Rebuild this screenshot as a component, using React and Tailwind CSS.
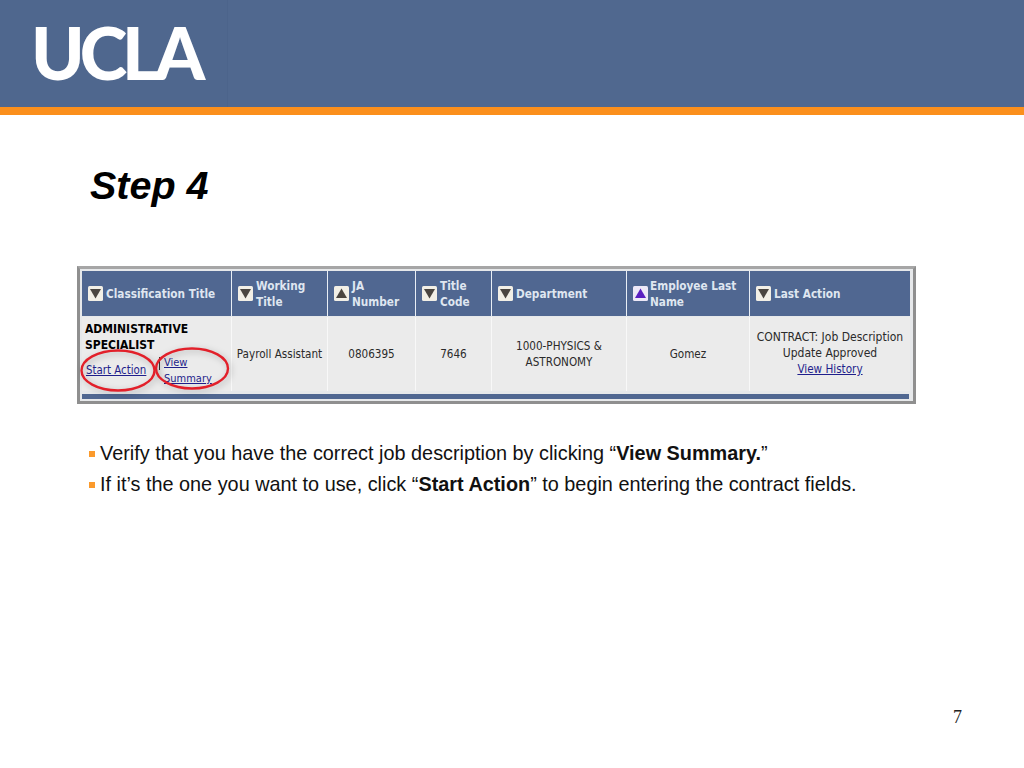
const Sans = "font-['Liberation_Sans',Arial,sans-serif]";
const Tbl = "font-['DejaVu_Sans_Condensed','DejaVu_Sans',sans-serif]";

function Arrow({ up, purple }) {
  return (
    <svg width="15" height="15" viewBox="0 0 15 15" className="shrink-0">
      <rect x="0" y="0" width="15" height="15" rx="1.5" fill={purple ? "#ede8f7" : "#f2efe6"} />
      <path d={up ? "M7.5 2.5 L13 12 L2 12 Z" : "M2 3 L13 3 L7.5 12.5 Z"} fill={purple ? "#5a1fc0" : "#4a4540"} />
    </svg>
  );
}

function Head({ w, up, purple, children, gap = "gap-[3px]" }) {
  return (
    <div className={`flex items-center ${gap} pl-[6px] bg-[#506791] border-r border-[#e8eef5] text-[#dfe6f0] font-bold text-[11.7px] leading-[16px] ${w}`}>
      <Arrow up={up} purple={purple} />
      <div>{children}</div>
    </div>
  );
}

function Cell({ w, children, size = "text-[11.6px]" }) {
  return (
    <div className={`flex items-center justify-center text-center bg-[#ebebeb] border-r border-[#f8f8f8] text-[#2a2a2a] ${size} leading-[16px] ${w}`}>
      <div>{children}</div>
    </div>
  );
}

const Link = ({ children }) => <span className="text-[#1f1f8c] underline">{children}</span>;

export default function App() {
  return (
    <div className={`relative w-[1024px] h-[768px] bg-white overflow-hidden ${Sans}`}>
      <div className="flex h-[107px] bg-[#50688f]">
        <div className="w-[228px] h-full bg-[#4f678e] border-r border-[#4c648b] pl-[31px] pt-[8px]">
          <div className="font-['Lato',sans-serif] font-black text-white text-[72px] leading-[88px] tracking-[-5px]">UCLA</div>
        </div>
      </div>
      <div className="h-[8px] bg-[#fb8f1c]" />

      <h1 className="ml-[90px] mt-[44px] text-[39.5px] leading-[52px] font-bold italic text-black">Step 4</h1>

      <div className={`relative ml-[77px] mt-[55px] w-[839px] h-[138px] border-[3px] border-[#8f8f8f] border-t-[#a6a6a6] bg-[#e6e8ea] p-[2px] ${Tbl}`}>
        <div className="flex h-[45px]">
          <Head w="w-[150px]">Classification Title</Head>
          <Head w="w-[96px]" gap="gap-[3px]"><div>Working<br />Title</div></Head>
          <Head w="w-[88px]" up gap="gap-[3px]"><div>JA<br />Number</div></Head>
          <Head w="w-[76px]" gap="gap-[3px]"><div>Title<br />Code</div></Head>
          <Head w="w-[135px]">Department</Head>
          <Head w="w-[123px]" up purple gap="gap-[2px]">Employee Last<br />Name</Head>
          <Head w="w-[160px] border-r-0" gap="gap-[3px]">Last Action</Head>
        </div>
        <div className="flex h-[74px] mt-px">
          <div className="w-[150px] bg-[#ebebeb] border-r border-[#f8f8f8] pl-[3px] pt-[4px] text-[12px] leading-[16px]">
            <div className="font-bold text-black">ADMINISTRATIVE<br />SPECIALIST</div>
            <div className="flex leading-[16px]">
              <div className="pl-px pt-[9px] w-[74px] text-[11.4px]"><Link>Start Action</Link></div>
              <div className="w-[1px] h-[13px] mt-[4px] bg-[#333]" />
              <div className="pl-[4px] mt-[2px] text-[11px]"><Link>View</Link><br /><Link>Summary</Link></div>
            </div>
          </div>
          <Cell w="w-[96px]">Payroll Assistant</Cell>
          <Cell w="w-[88px]">0806395</Cell>
          <Cell w="w-[76px]">7646</Cell>
          <Cell w="w-[135px]">1000-PHYSICS &amp;<br />ASTRONOMY</Cell>
          <Cell w="w-[123px]">Gomez</Cell>
          <Cell w="w-[160px] border-r-0" size="text-[12px]"><div className="-mt-[2px]">CONTRACT: Job Description<br />Update Approved</div><div className="text-[11.6px]"><Link>View History</Link></div></Cell>
        </div>
        <div className="h-[5px] mt-[3px] w-[827px] bg-[#506791]" />
        <svg className="absolute left-[-1px] top-[77px] pointer-events-none drop-shadow-[2px_2px_3px_rgba(0,0,0,0.25)]" width="160" height="56" viewBox="0 0 160 56">
          <ellipse cx="39" cy="24.5" rx="36.5" ry="20" fill="none" stroke="#e2202a" strokeWidth="2.4" />
          <ellipse cx="113" cy="22.5" rx="36" ry="20" fill="none" stroke="#e2202a" strokeWidth="2.4" />
        </svg>
      </div>

      <div className="ml-[89px] mt-[34px] text-[19.85px] leading-[31px] text-[#111]">
        <div className="flex items-center">
          <span className="w-[5.5px] h-[6px] bg-[#fb9a2c] mr-[5.5px]" />
          <span>Verify that you have the correct job description by clicking “<b>View Summary.</b>”</span>
        </div>
        <div className="flex items-center">
          <span className="w-[5.5px] h-[6px] bg-[#fb9a2c] mr-[5.5px]" />
          <span>If it’s the one you want to use, click “<b>Start Action</b>” to begin entering the contract fields.</span>
        </div>
      </div>

      <div className="absolute right-[62px] top-[706px] font-['Liberation_Serif',serif] text-[18px] leading-[22px] text-[#222]">7</div>
    </div>
  );
}
